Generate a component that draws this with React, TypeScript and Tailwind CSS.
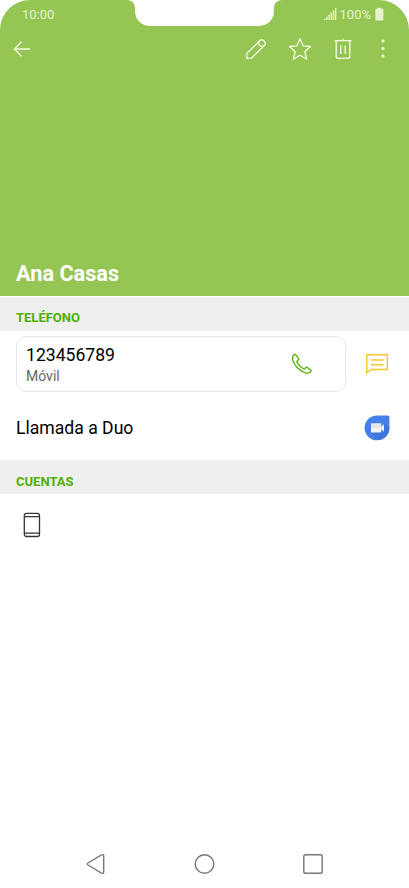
import React from 'react';
import clsx from 'clsx';

const StatusBar: React.FC = () => (
  <div className="relative flex h-[28px] items-center justify-between pl-[22px] pr-[25px] text-[13px] text-[#e6f4cd]">
    <svg className="absolute left-[127px] top-0" width="155" height="27" viewBox="0 0 155 27" fill="#fff">
      <path d="M0 0C6 .5 8 4 8 9V11C8 20 15 26 24 26H131C140 26 147 20 147 11V9C147 4 149 .5 155 0Z" />
    </svg>
    <span className="leading-none">10:00</span>
    <div className="flex items-center">
      <svg width="13" height="14" viewBox="0 0 13 14" fill="#e6f4cd">
        <rect x="0" y="11.5" width="1.5" height="1.5" />
        <rect x="2.2" y="9.7" width="1.5" height="3.3" />
        <rect x="4.4" y="7.6" width="1.5" height="5.4" />
        <rect x="6.6" y="5.4" width="1.5" height="7.6" />
        <rect x="8.8" y="3.2" width="1.5" height="9.8" />
        <rect x="11" y="1" width="1.4" height="12" />
      </svg>
      <span className="ml-[3px] leading-none">100%</span>
      <svg className="ml-[4px]" width="9" height="14" viewBox="0 0 9 14" fill="#e6f4cd">
        <path d="M2.4 1.8V.8h4v1H7.6q.8 0 .8.8V12.6q0 .8-.8.8H1.2q-.8 0-.8-.8V2.6q0-.8.8-.8Z" />
      </svg>
    </div>
  </div>
);

const Toolbar: React.FC = () => (
  <div className="flex h-[42px] items-center pl-[13px] pr-[23px] text-[#f5fce8]">
    <svg width="18" height="18" viewBox="0 0 18 18" fill="none" stroke="currentColor" strokeWidth="1.3">
      <path d="M17 9H2M8.5 1.8L1.5 9L8.5 16.2" />
    </svg>
    <svg className="ml-auto" width="22" height="22" viewBox="0 0 22 22" fill="none" stroke="currentColor" strokeWidth="1.3" strokeLinejoin="round">
      <path d="M1.600 15.700L14.800 2.500Q16.700.900 18.500 2.500L19.500 3.500Q21.200 5.400 19.500 7.200L6.300 20.400H1.600ZM13.600 3.700Q13.300 8.600 18.300 8.400" />
    </svg>
    <svg className="ml-[21px]" width="24" height="24" viewBox="0 0 24 24" fill="none" stroke="currentColor" strokeWidth="1.3" strokeLinejoin="round">
      <path d="M12 1.8L15.1 8.8L22.5 9.5L16.9 14.5L18.5 22L12 18.2L5.5 22L7.1 14.5L1.5 9.5L8.9 8.8Z" />
    </svg>
    <svg className="ml-[21px]" width="20" height="22" viewBox="0 0 20 22" fill="none" stroke="currentColor" strokeWidth="1.3">
      <path d="M1.500 2.700H18.500M10 .8V2.700M3.200 2.700V18.300Q3.200 20.300 5.200 20.300H14.800Q16.800 20.300 16.800 18.300V2.700M7.800 7.500V16M12.200 7.500V16" />
    </svg>
    <svg className="ml-[27px]" width="6" height="20" viewBox="0 0 6 20" fill="currentColor">
      <circle cx="3" cy="2" r="1.5" />
      <circle cx="3" cy="9.5" r="1.5" />
      <circle cx="3" cy="17" r="1.5" />
    </svg>
  </div>
);

const SectionHeader: React.FC<{ title: string; className?: string }> = ({ title, className }) => (
  <div className={clsx('flex h-[34px] items-center bg-[#efefef] pl-4 text-[13px] font-bold leading-none text-[#50b000]', className)}>
    {title}
  </div>
);

const DuoIcon: React.FC = () => (
  <svg width="26" height="26" viewBox="0 0 26 26">
    <path d="M13 .5H23.8Q25.4.5 25.4 2.1V13A12.4 12.4 0 1 1 13 .5Z" fill="#4580e8" />
    <path d="M7 17L14 25.3A12.4 12.4 0 0 0 25.400 13V12L20 8.500Z" fill="#3c76dc" />
    <rect x="7" y="8.500" width="10.2" height="9" rx=".8" fill="#f4f4f4" />
    <path d="M7 8.500H17.2V13H7Z" fill="#e6e6e6" />
    <path d="M17.200 11.800L20 9.200V16.800L17.200 14.200Z" fill="#f4f4f4" />
  </svg>
);

const NavigationBar: React.FC = () => (
  <div className="mt-auto flex h-[48px] items-center justify-between px-[85px] text-[#777]">
    <svg width="22" height="22" viewBox="0 0 22 22" fill="none" stroke="currentColor" strokeWidth="1.4">
      <path d="M3 10L16.5 1.9Q18.7.9 18.7 3.2V18.8Q18.7 21.1 16.5 20.1L3 12Q1.4 11 3 10Z" />
    </svg>
    <svg width="22" height="22" viewBox="0 0 22 22" fill="none" stroke="currentColor" strokeWidth="1.4">
      <circle cx="10.5" cy="11" r="9.3" />
    </svg>
    <svg width="22" height="22" viewBox="0 0 22 22" fill="none" stroke="currentColor" strokeWidth="1.4">
      <rect x="1.8" y="1.8" width="18.4" height="18.4" rx="1.8" />
    </svg>
  </div>
);

export default function App() {
  return (
    <div className="flex h-[888px] w-[409px] flex-col overflow-hidden bg-white font-['Roboto',sans-serif]">
      <header className="flex h-[296px] flex-col rounded-t-[30px] bg-[#95c653]">
        <StatusBar />
        <Toolbar />
        <h1 className="mt-auto pb-[11px] pl-4 text-[21.7px] font-bold leading-[22px] text-white">Ana Casas</h1>
      </header>

      <main className="pt-px">
        <SectionHeader title="TELÉFONO" className="pt-[6px]" />
        <div className="flex items-center pl-4 pt-[5px]">
          <div className="flex h-[56px] w-[330px] items-center rounded-[10px] border border-[#e8e8e8] pl-[9px]">
            <div className="pt-[2px]">
              <p className="text-[17.6px] leading-[22px] text-black">123456789</p>
              <p className="pt-px text-[14px] leading-[19px] text-[#666]">Móvil</p>
            </div>
            <svg className="ml-auto mr-[32px]" width="22" height="22" viewBox="0 0 22 22" fill="none" stroke="#50b000" strokeWidth="1.3" strokeLinejoin="round">
              <path d="M3.300 1.600Q4.200 1 4.900 1.900L7.600 5.600Q8.200 6.500 7.400 7L6.200 7.900Q5.500 8.500 6 9.400Q8.600 13.600 12.500 15.800Q13.300 16.200 14 15.500L14.800 14.600Q15.500 14 16.300 14.500L19.800 17Q20.600 17.700 20 18.400Q17.800 20.700 14.300 19.800Q4.500 16.300 1.600 6.500Q1 3.400 3.300 1.600Z" />
            </svg>
          </div>
          <svg className="ml-[19px]" width="24" height="22" viewBox="0 0 24 22" fill="none" stroke="#f3c52f" strokeWidth="1.4">
            <path d="M1.8 1.7H22.3V16.5H5.8L1.8 20ZM6 7H18.5M6 11.8H18.500" />
          </svg>
        </div>
        <div className="flex h-[68px] items-center justify-between pl-4 pr-[19px] pt-[4px]">
          <span className="text-[17.6px] text-black">Llamada a Duo</span>
          <DuoIcon />
        </div>
        <SectionHeader title="CUENTAS" className="pt-[8px]" />
        <div className="pl-[23px] pt-[18px]">
          <svg width="18" height="26" viewBox="0 0 18 26" fill="none" stroke="#333" strokeWidth="1.3">
            <rect x="1.3" y="1.3" width="15.2" height="23.2" rx="2.2" />
            <path d="M1.3 4.700H16.5M1.3 21.200H16.5" />
          </svg>
        </div>
      </main>

      <NavigationBar />
    </div>
  );
}
